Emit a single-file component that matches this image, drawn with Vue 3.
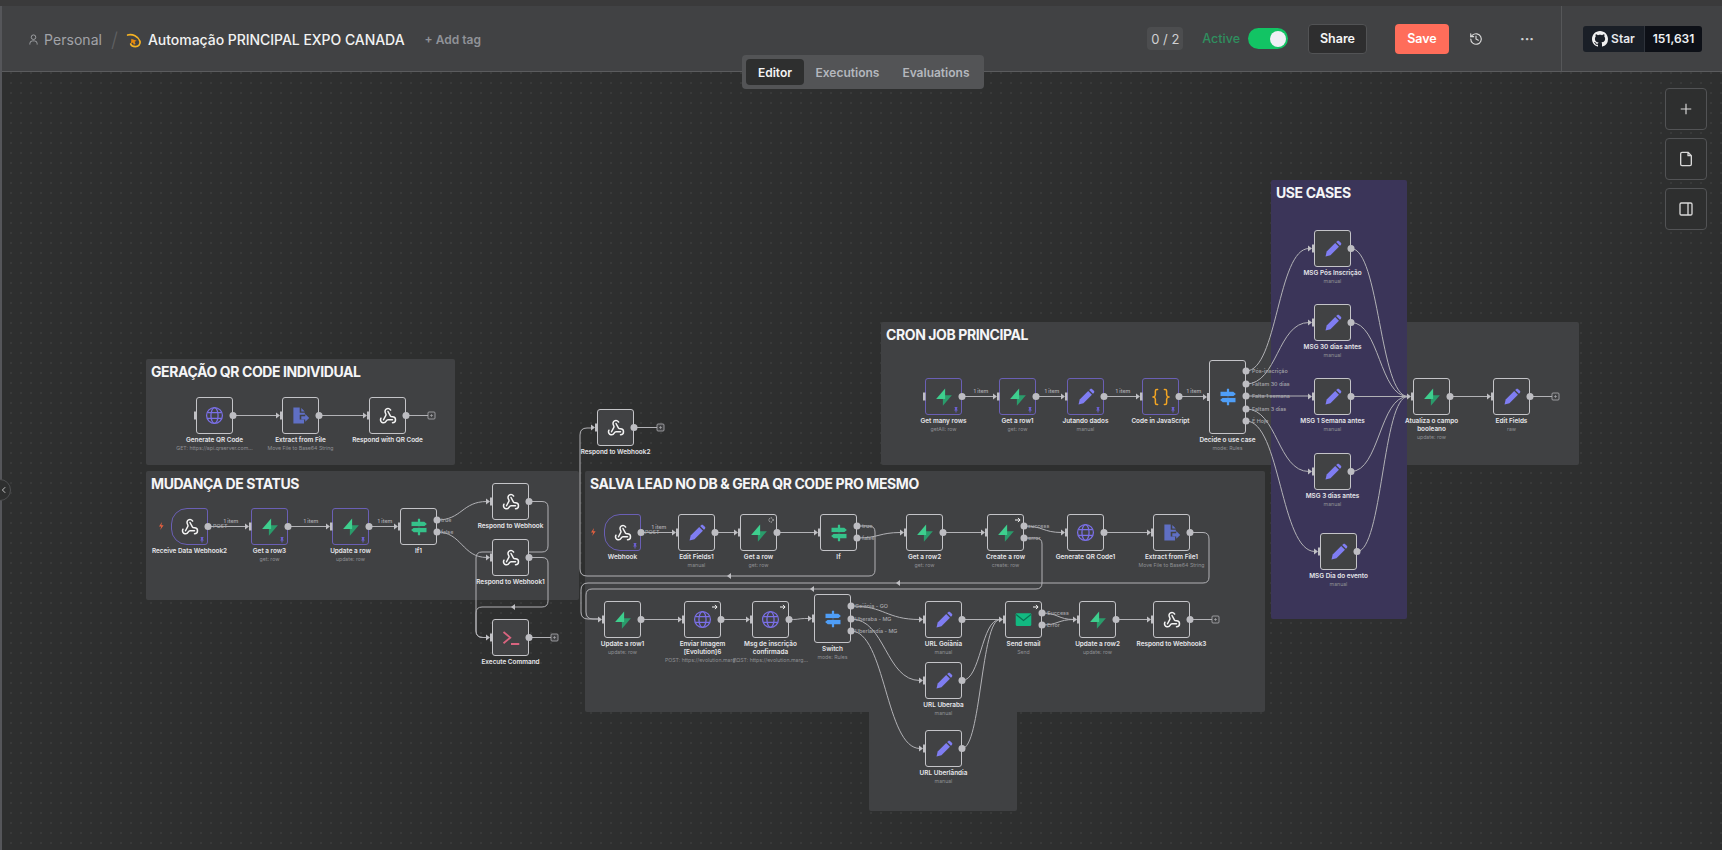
<script setup>
const nodesRaw = [
  { id: 'genqr', x: 196, y: 397, icon: 'globe', label: 'Generate QR Code', sub: 'GET: https://api.qrserver.com...', bareIn: true },
  { id: 'extract', x: 282, y: 397, icon: 'file', label: 'Extract from File', sub: 'Move File to Base64 String' },
  { id: 'respqr', x: 369, y: 397, icon: 'hook', label: 'Respond with QR Code' },
  { id: 'recv', x: 171, y: 508, icon: 'hook', label: 'Receive Data Webhook2', pin: true, trigger: true, noIn: true },
  { id: 'row3', x: 251, y: 508, icon: 'supa', label: 'Get a row3', sub: 'get: row', pin: true },
  { id: 'upd', x: 332, y: 508, icon: 'supa', label: 'Update a row', sub: 'update: row', pin: true },
  { id: 'if1', x: 400, y: 508, icon: 'sign', label: 'If1', outs: [520, 532] },
  { id: 'resp', x: 492, y: 483, icon: 'hook', label: 'Respond to Webhook' },
  { id: 'resp1', x: 492, y: 539, icon: 'hook', label: 'Respond to Webhook1' },
  { id: 'exec', x: 492, y: 619, icon: 'term', label: 'Execute Command' },
  { id: 'resp2', x: 597, y: 409, icon: 'hook', label: 'Respond to Webhook2' },
  { id: 'web', x: 604, y: 514, icon: 'hook', label: 'Webhook', pinOnly: true, trigger: true, noIn: true },
  { id: 'edit1', x: 678, y: 514, icon: 'pen', label: 'Edit Fields1', sub: 'manual' },
  { id: 'getrow', x: 740, y: 514, icon: 'supa', label: 'Get a row', sub: 'get: row', mark: 'dash' },
  { id: 'if', x: 820, y: 514, icon: 'sign', label: 'If', outs: [526, 538] },
  { id: 'row2', x: 906, y: 514, icon: 'supa', label: 'Get a row2', sub: 'get: row' },
  { id: 'create', x: 987, y: 514, icon: 'supa', label: 'Create a row', sub: 'create: row', mark: 'arrow', outs: [526, 538] },
  { id: 'gen1', x: 1067, y: 514, icon: 'globe', label: 'Generate QR Code1' },
  { id: 'ext1', x: 1153, y: 514, icon: 'file', label: 'Extract from File1', sub: 'Move File to Base64 String' },
  { id: 'updr1', x: 604, y: 601, icon: 'supa', label: 'Update a row1', sub: 'update: row' },
  { id: 'env', x: 684, y: 601, icon: 'globe', label: 'Enviar Imagem\n[Evolution]6', sub: 'POST: https://evolution.marg...', mark: 'arrow' },
  { id: 'msg', x: 752, y: 601, icon: 'globe', label: 'Msg de inscrição\nconfirmada', sub: 'POST: https://evolution.marg...', mark: 'arrow' },
  { id: 'sw', x: 814, y: 594, h: 49, icon: 'signb', label: 'Switch', sub: 'mode: Rules', outs: [606, 619, 631] },
  { id: 'goi', x: 925, y: 601, icon: 'pen', label: 'URL Goiânia', sub: 'manual' },
  { id: 'uba', x: 925, y: 662, icon: 'pen', label: 'URL Uberaba', sub: 'manual' },
  { id: 'udi', x: 925, y: 730, icon: 'pen', label: 'URL Uberlândia', sub: 'manual' },
  { id: 'mail', x: 1005, y: 601, icon: 'mail', label: 'Send email', sub: 'Send', mark: 'arrow', outs: [613, 625] },
  { id: 'updr2', x: 1079, y: 601, icon: 'supa', label: 'Update a row2', sub: 'update: row' },
  { id: 'resp3', x: 1153, y: 601, icon: 'hook', label: 'Respond to Webhook3' },
  { id: 'many', x: 925, y: 378, icon: 'supa', label: 'Get many rows', sub: 'getAll: row', pin: true, bareIn: true },
  { id: 'row1', x: 999, y: 378, icon: 'supa', label: 'Get a row1', sub: 'get: row', pin: true },
  { id: 'jut', x: 1067, y: 378, icon: 'pen', label: 'Jutando dados', sub: 'manual', pin: true },
  { id: 'code', x: 1142, y: 378, icon: 'code', label: 'Code in JavaScript', pin: true },
  { id: 'dec', x: 1209, y: 360, h: 74, icon: 'signb', label: 'Decide o use case', sub: 'mode: Rules', outs: [371, 384, 396, 409, 421] },
  { id: 'pos', x: 1314, y: 230, icon: 'pen', label: 'MSG Pós Inscrição', sub: 'manual' },
  { id: 'd30', x: 1314, y: 304, icon: 'pen', label: 'MSG 30 dias antes', sub: 'manual' },
  { id: 'sem', x: 1314, y: 378, icon: 'pen', label: 'MSG 1 Semana antes', sub: 'manual' },
  { id: 'd3', x: 1314, y: 453, icon: 'pen', label: 'MSG 3 dias antes', sub: 'manual' },
  { id: 'dia', x: 1320, y: 533, icon: 'pen', label: 'MSG Dia do evento', sub: 'manual' },
  { id: 'atu', x: 1413, y: 378, icon: 'supa', label: 'Atualiza o campo\nbooleano', sub: 'update: row' },
  { id: 'editf', x: 1493, y: 378, icon: 'pen', label: 'Edit Fields', sub: 'raw' },
]

const TOP = 72
const nodes = nodesRaw.map((n) => ({ ...n, h: n.h || 37 }))
const byId = Object.fromEntries(nodes.map((n) => [n.id, n]))
const midY = (n) => n.y + n.h / 2

const boxStyle = (n) => ({ left: n.x + 'px', top: n.y - TOP + 'px' })
const innerStyle = (n) => ({ height: n.h + 'px' })

function curve(x1, y1, x2, y2) {
  const end = x2 - 5
  if (Math.abs(y1 - y2) < 0.6) return `M${x1} ${y1}H${end}`
  const c = Math.max((end - x1) * 0.5, 14)
  return `M${x1} ${y1}C${x1 + c} ${y1} ${end - c} ${y2} ${end} ${y2}`
}

const links = [
  ['genqr', 'extract'], ['extract', 'respqr'],
  ['recv', 'row3'], ['row3', 'upd'], ['upd', 'if1'],
  ['if1', 'resp', 0], ['if1', 'resp1', 1],
  ['web', 'edit1'], ['edit1', 'getrow'], ['getrow', 'if'], ['if', 'row2', 1], ['row2', 'create'],
  ['create', 'gen1', 0], ['gen1', 'ext1'],
  ['updr1', 'env'], ['env', 'msg'], ['msg', 'sw'],
  ['sw', 'goi', 0], ['sw', 'uba', 1], ['sw', 'udi', 2],
  ['goi', 'mail'], ['uba', 'mail'], ['udi', 'mail'],
  ['mail', 'updr2', 0], ['mail', 'updr2', 1], ['updr2', 'resp3'],
  ['many', 'row1'], ['row1', 'jut'], ['jut', 'code'], ['code', 'dec'],
  ['dec', 'pos', 0], ['dec', 'd30', 1], ['dec', 'sem', 2], ['dec', 'd3', 3], ['dec', 'dia', 4],
  ['pos', 'atu'], ['d30', 'atu'], ['sem', 'atu'], ['d3', 'atu'], ['dia', 'atu'], ['atu', 'editf'],
]

const edgePaths = links.map(([a, b, out]) => {
  const f = byId[a]
  const t = byId[b]
  const y1 = out === undefined ? midY(f) : f.outs[out]
  return curve(f.x + 37, y1, t.x, midY(t))
})

const loopPaths = [
  'M857 526H869Q875 526 875 532V570Q875 576 869 576H587Q580 576 580 569V435Q580 428 587 428H592',
  'M1024 538H1036Q1042 538 1042 544V583Q1042 589 1036 589H592Q586 589 586 595V612Q586 619 593 619H599',
  'M1190 532.5H1203Q1209 532.5 1209 539V577Q1209 583 1203 583H588Q581 583 581 590V612Q581 619 588 619H599',
  'M529 501.5H542Q548 501.5 548 507V546Q548 552 542 552H482Q476 552 476 558V631Q476 637.5 483 637.5H487',
  'M529 557.5H542Q548 557.5 548 563V601Q548 607 542 607H482Q476 607 476 613V631Q476 637.5 483 637.5H487',
]
const midArrows = [[729, 576], [812, 589], [898, 583], [513, 607]]

const tails = [
  [406, 415.5, 428], [634, 427.5, 657], [529, 637.5, 551], [1190, 619.5, 1212], [1530, 396.5, 1552],
]

const inputs = nodes.filter((n) => !n.noIn)
const outputs = nodes.flatMap((n) =>
  (n.outs || [midY(n)]).map((y) => ({ x: n.x + 37, y }))
)

const pins = nodes.filter((n) => n.pin || n.pinOnly)
const bolts = [[161, 526], [593, 532]]

const edgeText = [
  [231, 523, '1 item'], [311, 523, '1 item'], [385, 523, '1 item'], [659, 529, '1 item'],
  [981, 393, '1 item'], [1052, 393, '1 item'], [1123, 393, '1 item'], [1194, 393, '1 item'],
]
const outText = [
  [213, 528, 'POST'], [441, 522, 'true'], [441, 534, 'false'], [645, 534, 'POST'],
  [862, 528, 'true'], [862, 540, 'false'], [1028, 528, 'success'], [1028, 540, 'error'],
  [855, 608, 'Goiânia - GO'], [855, 621, 'Uberaba - MG'], [855, 633, 'Uberlândia - MG'],
  [1047, 615, 'Success'], [1047, 627, 'Error'],
  [1252, 373, 'Pós-inscrição'], [1252, 386, 'Faltam 30 dias'], [1252, 398, 'Falta 1 semana'],
  [1252, 411, 'Faltam 3 dias'], [1252, 423, 'É Hoje'],
]

const stickies = [
  { t: 'GERAÇÃO QR CODE INDIVIDUAL', x: 146, y: 359, w: 309, h: 106 },
  { t: 'MUDANÇA DE STATUS', x: 146, y: 471, w: 433, h: 129 },
  { t: 'CRON JOB PRINCIPAL', x: 881, y: 322, w: 698, h: 143 },
  { t: 'SALVA LEAD NO DB & GERA QR CODE PRO MESMO', x: 585, y: 471, w: 680, h: 241 },
  { t: '', x: 869, y: 680, w: 148, h: 131 },
  { t: 'USE CASES', x: 1271, y: 180, w: 136, h: 439, purple: true },
]
const stickyStyle = (s) => ({
  left: s.x + 'px', top: s.y - TOP + 'px', width: s.w + 'px', height: s.h + 'px',
})
</script>

<template>
  <div class="app">
    <svg class="defs" width="0" height="0" aria-hidden="true">
      <defs>
        <symbol id="i-globe" viewBox="0 0 24 24">
          <g fill="none" stroke="#7a6fe6" stroke-width="1.600">
            <circle cx="12" cy="12" r="10" />
            <ellipse cx="12" cy="12" rx="4.500" ry="10" />
            <path d="M2.800 8.500h18.400M2.800 15.500h18.400" />
          </g>
        </symbol>
        <symbol id="i-file" viewBox="0 0 24 24">
          <path fill="#5f6fc4" d="M3 2h8v6.500h6.500V11H11v6h5.500v5H3z" />
          <path fill="#5f6fc4" d="M13 2.500l4.300 4.300H13zM13 13h5v-3l5 5-5 5v-3h-5z" />
        </symbol>
        <symbol id="i-hook" viewBox="0 0 24 24">
          <g fill="none" stroke="#f4f4f4" stroke-width="2" stroke-linecap="round" stroke-linejoin="round">
            <path d="M18 16.980h-5.990c-1.100 0-1.950.94-2.480 1.900A4 4 0 0 1 2 17c.01-.7.2-1.400.57-2" />
            <path d="m6 17 3.130-5.780c.53-.97.1-2.180-.5-3.100a4 4 0 1 1 6.890-4.060" />
            <path d="m12 6 3.130 5.730C15.660 12.700 16.900 13 18 13a4 4 0 0 1 0 8" />
          </g>
        </symbol>
        <symbol id="i-supa" viewBox="0 0 24 24">
          <path fill="#2a9c6b" d="M10.500 23.500L22.500 9.500H10.500z" />
          <path fill="#3ecf8e" d="M13.500 .5L1.500 14.500H13.500z" />
        </symbol>
        <symbol id="i-pen" viewBox="0 0 24 24">
          <path fill="#7f7df2" d="M2 22l1.600-6.600L14.900 4.100l5 5L8.600 20.400z" />
          <path fill="#7f7df2" d="M16.200 2.800l1.300-1.300c.8-.8 2-.8 2.800 0l2.200 2.200c.8.800.8 2 0 2.800l-1.300 1.300z" />
        </symbol>
        <symbol id="i-sign" viewBox="0 0 24 24">
          <path fill="#35c28a" d="M10.500 1h3v22h-3z" />
          <path fill="#35c28a" d="M2 5h17l3.500 3-3.500 3H2zM22 13H5l-3.500 3L5 19h17z" />
          <path fill="#414244" d="M2 11h20v2H2z" />
        </symbol>
        <symbol id="i-signb" viewBox="0 0 24 24">
          <path fill="#4f9ef7" d="M10.500 1h3v22h-3z" />
          <path fill="#4f9ef7" d="M2 5h17l3.500 3-3.500 3H2zM22 13H5l-3.500 3L5 19h17z" />
          <path fill="#414244" d="M2 11h20v2H2z" />
        </symbol>
        <symbol id="i-term" viewBox="0 0 24 24">
          <path fill="none" stroke="#d9647f" stroke-width="2.400" d="M2 4l9 7.500-9 7.500M12 20h11" />
        </symbol>
        <symbol id="i-code" viewBox="0 0 24 24">
          <path fill="none" stroke="#f5a623" stroke-width="2" stroke-linecap="round"
            d="M7.500 2H6.500C5 2 4.500 3 4.500 4v5c0 1.500-1 2.500-2.500 3 1.500.5 2.500 1.500 2.500 3v5c0 1 .5 2 2 2h1M16.500 2h1c1.500 0 2 1 2 2v5c0 1.500 1 2.500 2.500 3-1.500.5-2.500 1.500-2.500 3v5c0 1-.5 2-2 2h-1" />
        </symbol>
        <symbol id="i-mail" viewBox="0 0 24 24">
          <rect x="1" y="3" width="22" height="18" rx="1.500" fill="#12b981" />
          <path fill="none" stroke="#0b6f52" stroke-width="1.600" d="M1.500 5L12 13.500 22.500 5" />
        </symbol>
      </defs>
    </svg>

    <header class="bar">
      <div class="crumbs">
        <svg class="person" viewBox="0 0 24 24" width="11" height="11">
          <g fill="none" stroke="#a3a5a9" stroke-width="2">
            <circle cx="12" cy="7" r="5" />
            <path d="M4 23v-2a6 6 0 0 1 6-6h4a6 6 0 0 1 6 6v2" />
          </g>
        </svg>
        <span class="personal">Personal</span>
        <span class="slash">/</span>
        <svg class="logo" viewBox="0 0 24 24" width="16" height="16">
          <path fill="none" stroke="#f5b324" stroke-width="2.600" stroke-linecap="round"
            d="M2.500 4.500C10 3 18 6 21 14c1 4-2 8-7 8-3.500 0-6-1.500-7-4" />
          <path fill="#e8890c" d="M8 10l8 3-3 1.800 1.300 3.200-2.600 1-1.400-3.200L7.500 17.500z" />
        </svg>
        <span class="title">Automação PRINCIPAL EXPO CANADA</span>
        <span class="addtag">+ Add tag</span>
      </div>
      <div class="actions">
        <span class="count">0 / 2</span>
        <span class="active">Active</span>
        <span class="toggle"><i></i></span>
        <button class="btn share">Share</button>
        <button class="btn save">Save</button>
        <svg class="history" viewBox="0 0 24 24" width="14" height="14">
          <g fill="none" stroke="#d8d8d8" stroke-width="2" stroke-linecap="round" stroke-linejoin="round">
            <path d="M3 12a9 9 0 1 0 3-6.700L3 8" />
            <path d="M3 3v5h5M12 7v5l4 2" />
          </g>
        </svg>
        <span class="dots">···</span>
      </div>
      <div class="gh">
        <div class="gh-star">
          <svg viewBox="0 0 16 16" width="16" height="16">
            <path fill="#f0f0f0"
              d="M8 0C3.580 0 0 3.580 0 8c0 3.540 2.290 6.530 5.470 7.590.4.070.55-.17.55-.38 0-.19-.01-.82-.01-1.490-2.010.37-2.530-.49-2.690-.94-.09-.23-.48-.94-.82-1.130-.28-.15-.68-.52-.01-.53.63-.01 1.080.58 1.230.82.72 1.210 1.870.87 2.330.66.07-.52.28-.87.51-1.070-1.780-.2-3.640-.89-3.640-3.950 0-.87.31-1.590.82-2.150-.08-.2-.36-1.020.08-2.120 0 0 .67-.21 2.200.82.64-.18 1.320-.27 2-.27s1.360.09 2 .27c1.530-1.040 2.200-.82 2.200-.82.44 1.100.16 1.920.08 2.120.51.56.82 1.270.82 2.150 0 3.070-1.870 3.750-3.650 3.950.29.25.54.73.54 1.480 0 1.070-.01 1.930-.01 2.200 0 .21.15.46.55.38A8.010 8.010 0 0016 8c0-4.420-3.580-8-8-8z" />
          </svg>
          <span>Star</span>
        </div>
        <div class="gh-count">151,631</div>
      </div>
    </header>

    <main class="canvas">
      <div v-for="s in stickies" :key="s.x + '-' + s.y" class="sticky" :class="{ purple: s.purple }" :style="stickyStyle(s)">{{ s.t }}</div>

      <svg class="layer" viewBox="0 72 1722 778" width="1722" height="778">
        <g fill="none" stroke="#b2b2b6" stroke-width="1">
          <path v-for="(d, i) in edgePaths" :key="'e' + i" :d="d" />
          <path v-for="(d, i) in loopPaths" :key="'l' + i" :d="d" />
          <path v-for="(t, i) in tails" :key="'t' + i" :d="`M${t[0]} ${t[1]}H${t[2]}`" />
        </g>
        <g fill="#c0c0c4">
          <path v-for="(a, i) in midArrows" :key="'m' + i" :d="`M${a[0] - 2} ${a[1]}l4 -3v6z`" />
        </g>
      </svg>

      <div v-for="n in nodes" :key="n.id" class="node" :style="boxStyle(n)">
        <div class="box" :class="{ pinned: n.pin || n.pinOnly, trigger: n.trigger }" :style="innerStyle(n)">
          <svg class="ico" :class="'ico-' + n.icon" viewBox="0 0 24 24"><use :href="'#i-' + n.icon" /></svg>
          <svg v-if="n.mark === 'arrow'" class="mark" viewBox="0 0 10 10">
            <path fill="none" stroke="#fff" stroke-width="1.600" d="M0 5h8M5 1.500L8.500 5 5 8.500" />
          </svg>
          <svg v-if="n.mark === 'dash'" class="mark" viewBox="0 0 10 10">
            <circle cx="5" cy="5" r="3.500" fill="none" stroke="#fff" stroke-width="1.300" stroke-dasharray="1.800 1.800" />
          </svg>
        </div>
        <div class="label">{{ n.label }}</div>
        <div v-if="n.sub" class="sub">{{ n.sub }}</div>
      </div>

      <svg class="layer" viewBox="0 72 1722 778" width="1722" height="778">
        <g v-for="n in inputs" :key="'i' + n.id">
          <rect :x="n.x - 2" :y="n.y + n.h / 2 - 4" width="2.500" height="8" fill="#c0c0c4" />
          <path v-if="!n.bareIn" :d="`M${n.x - 6} ${n.y + n.h / 2 - 3}l4 3 -4 3z`" fill="#c0c0c4" />
        </g>
        <circle v-for="(o, i) in outputs" :key="'o' + i" :cx="o.x" :cy="o.y" r="3.500" fill="#bdbdc2" />
        <g v-for="(t, i) in tails" :key="'p' + i">
          <rect :x="t[2]" :y="t[1] - 3.500" width="7" height="7" rx="1" fill="#414244" stroke="#b0b0b4" stroke-width=".8" />
          <path :d="`M${t[2] + 2} ${t[1]}h3M${t[2] + 3.500} ${t[1] - 1.500}v3`" stroke="#b0b0b4" stroke-width=".6" />
        </g>
        <g fill="#6a5fd0">
          <path v-for="n in pins" :key="'pin' + n.id" :d="`M${n.x + 29.500} ${n.y + 29}h3l-.6 2 1 1.500h-1.400v2h-1v-2h-1.400l1-1.500z`" />
        </g>
        <path v-for="(b, i) in bolts" :key="'b' + i" :d="`M${b[0] + 1} ${b[1] - 4}l-3 4.500h2.200l-1 3.500 3.400 -4.800h-2.300z`" fill="#e8603f" />
        <text v-for="(t, i) in edgeText" :key="'et' + i" :x="t[0]" :y="t[1]" class="etxt" text-anchor="middle">{{ t[2] }}</text>
        <text v-for="(t, i) in outText" :key="'ot' + i" :x="t[0]" :y="t[1]" class="otxt">{{ t[2] }}</text>
      </svg>

      <div class="tools">
        <button class="tool">
          <svg viewBox="0 0 24 24" width="14" height="14"><path fill="none" stroke="#d8d8d8" stroke-width="2" d="M12 3v18M3 12h18" /></svg>
        </button>
        <button class="tool">
          <svg viewBox="0 0 24 24" width="16" height="16"><path fill="none" stroke="#d8d8d8" stroke-width="2" stroke-linejoin="round" d="M4 4a2 2 0 0 1 2-2h9l5 5v13a2 2 0 0 1-2 2H6a2 2 0 0 1-2-2zM15 2v5h5" /></svg>
        </button>
        <button class="tool">
          <svg viewBox="0 0 24 24" width="16" height="16"><path fill="none" stroke="#d8d8d8" stroke-width="2" d="M5 3h14a2 2 0 0 1 2 2v14a2 2 0 0 1-2 2H5a2 2 0 0 1-2-2V5a2 2 0 0 1 2-2zM15 3v18" /></svg>
        </button>
      </div>
    </main>

    <nav class="tabs">
      <span class="tab on">Editor</span>
      <span class="tab">Executions</span>
      <span class="tab">Evaluations</span>
    </nav>

    <div class="edge"></div>
    <div class="collapse">
      <svg viewBox="0 0 10 10" width="8" height="8"><path fill="none" stroke="#c8c8c8" stroke-width="1.200" d="M6.500 1.500L3 5l3.500 3.500" /></svg>
    </div>
  </div>
</template>

<style>
html, body { margin: 0; background: #2e2f2f; }
</style>

<style scoped>
.app {
  position: relative;
  width: 1722px;
  height: 850px;
  overflow: hidden;
  display: flex;
  flex-direction: column;
  padding-top: 6px;
  box-sizing: border-box;
  background: #3a3a3b;
  font-family: Inter, "Noto Sans", sans-serif;
}
.defs { position: absolute; }
.bar {
  height: 66px;
  box-sizing: border-box;
  flex: none;
  display: flex;
  align-items: center;
  background: #414244;
  border-bottom: 1px solid #5b5c5e;
}
.crumbs {
  display: flex;
  align-items: center;
  padding: 0 0 0 28px;
  margin-top: 2px;
}
.person { margin-right: 5px; }
.personal { font-size: 14px; color: #a1a3a8; letter-spacing: .05px; }
.slash { margin: 0 8px 0 9px; font-size: 20px; font-weight: 300; color: #5f6062; }
.logo { margin-right: 6px; }
.title { font-size: 14px; font-weight: 500; color: #f2f2f2; letter-spacing: -.04px; white-space: nowrap; }
.addtag { margin-left: 20px; font-size: 12px; font-weight: 600; color: #909298; }
.actions {
  margin-left: auto;
  display: flex;
  align-items: center;
  height: 100%;
}
.count {
  width: 36px; height: 23px; display: flex; align-items: center; justify-content: center;
  background: #4c4d4f; border-radius: 4px; font-size: 13px; color: #d0d0d2; margin-right: 19px;
}
.active { font-size: 12.500px; font-weight: 500; color: #2f8f5f; margin-right: 8px; }
.toggle {
  width: 40px; height: 21px; border-radius: 11px; background: #12c464; position: relative; margin-right: 20px;
}
.toggle i {
  position: absolute; right: 2px; top: 2.500px; width: 16px; height: 16px; border-radius: 50%; background: #eef0f5;
}
.btn {
  height: 30px; box-sizing: border-box; border-radius: 4px; font: 600 12.500px Inter, sans-serif; color: #f5f5f5; padding: 0;
}
.share { width: 59px; background: #2e2e2f; border: 1px solid #525355; margin-right: 28px; }
.save { width: 54px; background: #ff6d5a; border: none; color: #fff; margin-right: 20px; }
.history { margin-right: 37px; }
.dots { color: #d0d0d0; font-size: 14px; font-weight: 700; margin-right: 27px; letter-spacing: 0; }
.gh {
  width: 161px; height: 100%; box-sizing: border-box; border-left: 1px solid #565759;
  display: flex; align-items: center; padding-left: 21px;
}
.gh-star {
  width: 62px; height: 26px; background: #1a1f27; border-radius: 3px 0 0 3px; display: flex; align-items: center;
  justify-content: center; gap: 3px; font-size: 12px; font-weight: 600; color: #e6e8ec; border-right: 1px solid #2e333b; box-sizing: border-box;
}
.gh-count {
  width: 57px; height: 26px; background: #0d1017; border-radius: 0 3px 3px 0; display: flex; align-items: center;
  justify-content: center; font-size: 12px; font-weight: 600; color: #eef0f3;
}
.canvas {
  position: relative;
  flex: 1;
  background-color: #2e2f2f;
  background-image: radial-gradient(circle at 1px 1px, #393a3a .7px, transparent .9px);
  background-size: 10px 10px;
}
.sticky {
  position: absolute;
  box-sizing: border-box;
  padding: 4px 5px;
  border-radius: 2px;
  background: #404143;
  color: #f5f5f7;
  font-size: 14px;
  font-weight: 700;
  letter-spacing: -.4px;
  line-height: 18px;
  white-space: nowrap;
}
.sticky.purple { background: #3b3559; }
.layer { position: absolute; left: 0; top: 0; pointer-events: none; overflow: visible; }
.node {
  position: absolute;
  width: 37px;
  display: flex;
  flex-direction: column;
  align-items: center;
}
.box {
  width: 37px;
  flex: none;
  box-sizing: border-box;
  position: relative;
  display: flex;
  align-items: center;
  justify-content: center;
  background: #414244;
  border: 1px solid #c4c4c8;
  border-radius: 3px;
}
.box.pinned { border-color: #6a5fb5; }
.box.trigger { border-radius: 16px 3px 3px 16px; }
.ico { width: 18px; height: 18px; }
.ico-globe, .ico-file { width: 19px; height: 19px; }
.ico-code { width: 18px; height: 18px; }
.ico-mail { width: 17px; height: 17px; }
.mark { position: absolute; right: 2px; top: 2px; width: 6px; height: 6px; }
.label {
  margin-top: 2px;
  font-size: 6.400px;
  line-height: 8px;
  font-weight: 600;
  color: #e6e6ea;
  white-space: pre;
  text-align: center;
}
.sub {
  margin-top: 1px;
  font-size: 5.200px;
  line-height: 6px;
  color: #8f9094;
  white-space: nowrap;
}
.etxt { font: 500 5.400px Inter, sans-serif; fill: #b0b0b4; }
.otxt { font: 500 5.400px Inter, sans-serif; fill: #a8a8ac; }
.tools {
  position: absolute;
  left: 1665px;
  top: 16px;
  display: flex;
  flex-direction: column;
  gap: 8px;
}
.tool {
  width: 42px; height: 42px; padding: 0; box-sizing: border-box; background: #2e2f2f; border: 1px solid #525355; border-radius: 4px;
  display: flex; align-items: center; justify-content: center;
}
.tabs {
  position: absolute;
  left: 742px;
  top: 55px;
  width: 242px;
  height: 34px;
  box-sizing: border-box;
  padding: 4px;
  display: flex;
  align-items: center;
  background: #535456;
  border-radius: 4px;
  font-size: 12px;
  font-weight: 600;
  color: #b4b7bd;
}
.tab { height: 26px; flex: none; display: flex; align-items: center; padding: 0 11.500px; white-space: nowrap; }
.tab.on { width: 58px; padding: 0; justify-content: center; background: #2e2f2f; color: #f4f4f4; border-radius: 4px; }
.edge { position: absolute; left: 0; top: 6px; bottom: 0; width: 2px; background: #55565a; }
.collapse {
  position: absolute; left: -11px; top: 479px; width: 22px; height: 22px; box-sizing: border-box; border-radius: 50%;
  background: #2e2f2f; border: 1px solid #4e4f51; display: flex; align-items: center; justify-content: flex-end; padding-right: 2px;
}
</style>
